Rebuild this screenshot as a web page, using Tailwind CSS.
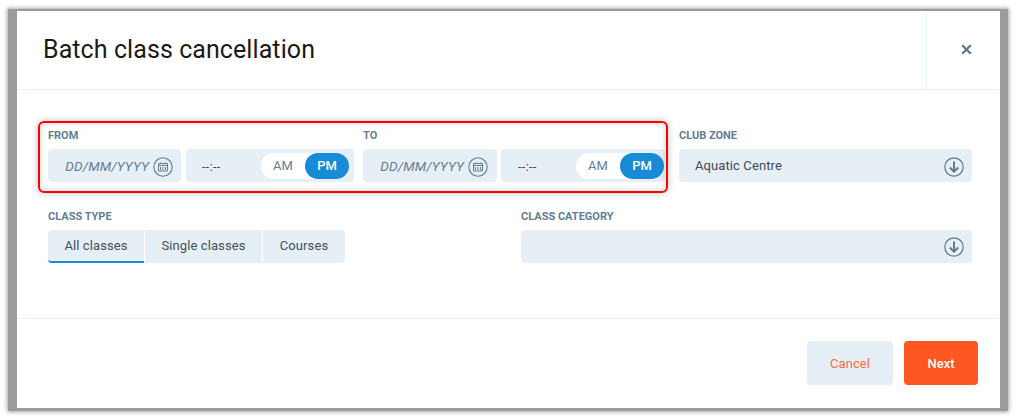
<!doctype html>
<html><head><meta charset="utf-8"><script src="https://cdn.jsdelivr.net/npm/@tailwindcss/browser@4"></script></head>
<body class="bg-white w-[1017px] h-[419px] overflow-hidden font-['Roboto',sans-serif]">
<div class="pt-[9px] pl-[8px] w-[1008px]">
<div class="w-[1000px] h-[402px] bg-[#9b9b9b] pl-[9px] pr-[8px] pt-[2px] pb-[3px] shadow-[0_0_4px_1px_rgba(0,0,0,0.35)]">
<div class="relative bg-white h-[397px] w-[983px] flex flex-col">
  <div class="flex h-[79px] border-b border-[#e8eff5]">
    <h1 class="flex-1 pl-[26px] pt-[23px] text-[25px] leading-[32px] tracking-[0.08px] text-[#1a1a1a]">Batch class cancellation</h1>
    <div class="w-[74px] border-l border-[#e8eff5] flex items-center justify-center pl-[6px] pb-[2px]">
      <svg width="11" height="11" viewBox="0 0 11 11"><path d="M1.2 1.2 9.8 9.8M9.8 1.2 1.2 9.8" stroke="#5b7387" stroke-width="2.1" fill="none"/></svg>
    </div>
  </div>
  <div class="h-[229px] border-b border-[#e8eff5] pl-[31px] pr-[28px] pt-[38px]">
    <div class="flex">
      <div class="w-[315px]">
        <div class="text-[11px] leading-[14px] font-bold text-[#647d92] h-[21px] pt-[1px]">FROM</div>
        <div class="flex gap-[5px] h-[33px]">
          <div class="w-[133px] bg-[#e7eff6] rounded-[4px] flex items-center justify-end pr-[8px] gap-[4px] pt-[2px]">
            <span class="text-[13.5px] italic text-[#647d92] tracking-[0.1px]">DD/MM/YYYY</span>
            <svg width="20" height="20" viewBox="0 0 20 20" fill="none" stroke="#647d92"><circle cx="10" cy="10" r="9.2" stroke-width="1.1"/><path d="M5.5 6.500h9v7.500h-9zM5.500 8.500h9M7.500 5.500v1.500M12.500 5.500v1.500M7.500 10v3M10 10v3M12.500 10v3" stroke-width="1"/></svg>
          </div>
          <div class="relative w-[168px] bg-[#e7eff6] rounded-[4px] flex items-center pl-[16px] pt-[2px]">
            <span class="text-[12px] text-[#3c4650] tracking-[0.5px]">--:--</span>
            <div class="absolute left-[75px] top-[4px] w-[88px] h-[26px] rounded-full bg-white flex text-[13px] pb-[1px]">
              <span class="w-[44px] flex items-center justify-center text-[#647d92]">AM</span>
              <span class="w-[44px] -mb-[1px] pb-[1px] flex items-center justify-center rounded-full bg-[#178bd6] text-white font-medium">PM</span>
            </div>
          </div>
        </div>
      </div>
      <div class="w-[316px]">
        <div class="text-[11px] leading-[14px] font-bold text-[#647d92] h-[21px] pt-[1px]">TO</div>
        <div class="flex gap-[4px] h-[33px]">
          <div class="w-[134px] bg-[#e7eff6] rounded-[4px] flex items-center justify-end pr-[9px] gap-[4px] pt-[2px]">
            <span class="text-[13.5px] italic text-[#647d92] tracking-[0.1px]">DD/MM/YYYY</span>
            <svg width="20" height="20" viewBox="0 0 20 20" fill="none" stroke="#647d92"><circle cx="10" cy="10" r="9.2" stroke-width="1.1"/><path d="M5.5 6.500h9v7.500h-9zM5.500 8.500h9M7.500 5.500v1.500M12.500 5.500v1.500M7.500 10v3M10 10v3M12.500 10v3" stroke-width="1"/></svg>
          </div>
          <div class="relative w-[164px] bg-[#e7eff6] rounded-[4px] flex items-center pl-[17px] pt-[2px]">
            <span class="text-[12px] text-[#3c4650] tracking-[0.5px]">--:--</span>
            <div class="absolute left-[75px] top-[4px] w-[88px] h-[26px] rounded-full bg-white flex text-[13px] pb-[1px]">
              <span class="w-[44px] flex items-center justify-center text-[#647d92]">AM</span>
              <span class="w-[44px] -mb-[1px] pb-[1px] flex items-center justify-center rounded-full bg-[#178bd6] text-white font-medium">PM</span>
            </div>
          </div>
        </div>
      </div>
      <div class="w-[293px]">
        <div class="text-[11px] leading-[14px] font-bold text-[#647d92] h-[21px] pt-[1px]">CLUB ZONE</div>
        <div class="h-[33px] bg-[#e7eff6] rounded-[4px] flex items-center justify-between pl-[16px] pr-[8px] pt-[2px]">
          <span class="text-[13px] text-[#3f4a54] tracking-[0.1px] -mt-[1px]">Aquatic Centre</span>
          <svg width="20" height="20" viewBox="0 0 20 20" fill="none" stroke="#5d7890"><circle cx="10" cy="10" r="9.2" stroke-width="1.2"/><path d="M10 4.500v10M5.800 10.500 10 14.700l4.200-4.200" stroke-width="1.900"/></svg>
        </div>
      </div>
    </div>
    <div class="flex mt-[27px]">
      <div class="w-[473px]">
        <div class="text-[11px] leading-[14px] font-bold text-[#647d92] h-[21px] pt-[1px]">CLASS TYPE</div>
        <div class="flex gap-[1px] h-[33px] text-[13px] text-[#454f59] tracking-[0.1px]">
          <div class="w-[96px] bg-[#e7eff6] rounded-l-[4px] border-b-2 border-[#178bd6] flex items-center justify-center">All classes</div>
          <div class="w-[117px] bg-[#e7eff6] flex items-center justify-center pb-[1px]">Single classes</div>
          <div class="w-[82px] bg-[#e7eff6] rounded-r-[4px] flex items-center justify-center pb-[1px]">Courses</div>
        </div>
      </div>
      <div class="w-[451px]">
        <div class="text-[11px] leading-[14px] font-bold text-[#647d92] h-[21px] pt-[1px]">CLASS CATEGORY</div>
        <div class="h-[33px] bg-[#e7eff6] rounded-[4px] flex items-center justify-end pr-[8px]">
          <svg width="20" height="20" viewBox="0 0 20 20" fill="none" stroke="#5d7890"><circle cx="10" cy="10" r="9.2" stroke-width="1.2"/><path d="M10 4.500v10M5.800 10.500 10 14.700l4.200-4.200" stroke-width="1.900"/></svg>
        </div>
      </div>
    </div>
  </div>
  <div class="h-[89px] flex justify-end gap-[11px] pt-[22px] pr-[22px]">
    <button class="w-[86px] h-[44px] rounded-[4px] bg-[#e7eff6] text-[#ff6a3c] text-[13px] tracking-[0.1px] pt-[2px]">Cancel</button>
    <button class="w-[74px] h-[44px] rounded-[4px] bg-[#ff5722] text-white text-[13px] font-medium pt-[2px]">Next</button>
  </div>
  <div class="absolute left-[21px] top-[110px] w-[630px] h-[72px] rounded-[6px] border-2 border-[#ff0000] shadow-[0_0_7px_rgba(0,0,0,0.25),inset_0_0_7px_rgba(0,0,0,0.18)] pointer-events-none"></div>
</div>
</div>
</div>
</body></html>
